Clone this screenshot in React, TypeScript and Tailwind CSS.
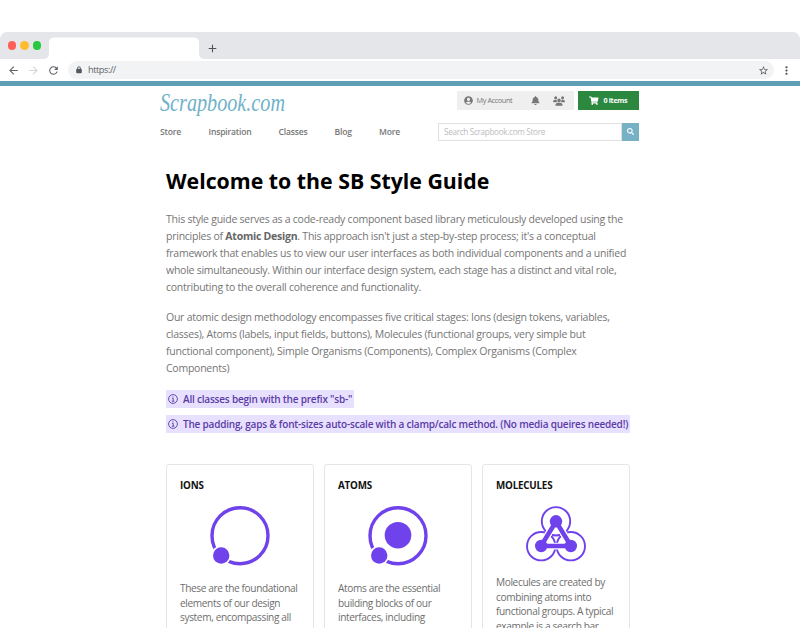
import type { ReactNode } from "react";
import { FaBell, FaShoppingCart, FaSearch, FaUserCircle } from "react-icons/fa";
import { FaUsers } from "react-icons/fa6";
import { MdArrowBack, MdArrowForward, MdRefresh, MdStarBorder, MdMoreVert, MdAdd } from "react-icons/md";

const PURPLE = "#6f42ec";

function Lines({ lines }: { lines: ReactNode[] }) {
  return (
    <>
      {lines.map((line, i) => (
        <span key={i} className="block whitespace-nowrap">{line}</span>
      ))}
    </>
  );
}

function Chrome() {
  return (
    <div className="mt-8 h-[54px] w-full">
      <div className="flex h-[27px] items-end rounded-t-[7px] bg-[#e5e6ea]">
        <div className="flex h-[27px] w-[43px] shrink-0 items-center gap-[4.3px] pl-[7.8px]">
          <span className="size-[8.3px] rounded-full bg-[#ff5f57]" />
          <span className="size-[8.3px] rounded-full bg-[#febc2e]" />
          <span className="size-[8.3px] rounded-full bg-[#28c840]" />
        </div>
        <svg className="h-[22px] w-[162px] shrink-0" viewBox="0 0 162 22">
          <path d="M0 22 Q6 22 6 16 V6 Q6 .5 11 .5 H151 Q156 .5 156 6 V16 Q156 22 162 22Z" fill="#fff" />
        </svg>
        <MdAdd className="mb-[4.5px] ml-[1px] size-[13px] text-[#4d5056]" />
      </div>
      <div className="flex h-[22px] items-center">
        <MdArrowBack className="ml-[7px] size-[13px] shrink-0 text-[#5f6368]" />
        <MdArrowForward className="ml-[7px] size-[13px] shrink-0 text-[#d5d6d9]" />
        <MdRefresh className="ml-[7px] size-[13px] shrink-0 text-[#5f6368]" />
        <div className="ml-[8px] flex h-[18px] w-[706px] shrink-0 items-center rounded-full bg-[#f1f3f4] pl-[8px]">
          <svg className="h-[8px] w-[6px]" viewBox="0 0 6 8">
            <rect x=".2" y="2.8" width="5.6" height="4.4" rx="1" fill="#55585d" />
            <path d="M1.5 3V2.3a1.5 1.5 0 0 1 3 0V3" fill="none" stroke="#55585d" strokeWidth=".9" />
          </svg>
          <span className="ml-[6px] text-[9.3px] leading-none tracking-[-0.5px] text-[#5f6368]">https://</span>
          <MdStarBorder className="mr-[5px] ml-auto size-[11px] text-[#5f6368]" />
        </div>
        <MdMoreVert className="ml-[5.5px] size-[13px] shrink-0 text-[#4d5056]" />
      </div>
      <div className="h-[5px] bg-[#5f9fb5]" />
    </div>
  );
}

function Header() {
  return (
    <header className="ml-[160px] flex h-[58px] w-[479px] shrink-0 justify-between text-[#777]">
      <div className="w-[260px]">
        <svg className="block h-[34px] w-[130px] overflow-visible" viewBox="0 0 130 34">
          <text x="0" y="24.5" textLength="125" lengthAdjust="spacingAndGlyphs" fill="#6fb2c8" fontSize="25" fontStyle="italic" fontFamily="'Liberation Serif', serif">Scrapbook.com</text>
        </svg>
        <nav className="mt-[6px] flex text-[8.6px] leading-[12px] font-semibold tracking-[-0.2px]">
          <span className="w-[48.5px]">Store</span>
          <span className="w-[70px]">Inspiration</span>
          <span className="w-[56px]">Classes</span>
          <span className="w-[44.5px]">Blog</span>
          <span>More</span>
        </nav>
      </div>
      <div className="w-[201px] pt-[5px]">
        <div className="ml-[19px] flex h-[19px] justify-between">
          <div className="flex w-[117px] items-center bg-[#efefef] pl-[7px] text-[#777]">
            <FaUserCircle className="size-[9px]" />
            <span className="ml-[3.5px] w-[37px] text-[7.3px] tracking-[-0.4px] whitespace-nowrap">My Account</span>
            <FaBell className="ml-[17px] size-[9px]" />
            <FaUsers className="ml-[13.5px] size-[12px]" />
          </div>
          <div className="flex w-[61px] items-center bg-[#2c873f] pl-[11px] text-white">
            <FaShoppingCart className="size-[9.5px]" />
            <span className="ml-[5px] text-[7.2px] font-bold tracking-[-0.35px] whitespace-nowrap">0 items</span>
          </div>
        </div>
        <div className="mt-[12.5px] flex h-[18.5px]">
          <div className="flex w-[184px] items-center border border-[#dfdfdf] pl-[5px] text-[8.2px] tracking-[-0.33px] text-[#bdbdbd]">Search Scrapbook.com Store</div>
          <div className="flex w-[17px] items-center justify-center bg-[#76b1c6]">
            <FaSearch className="size-[7px] text-white" />
          </div>
        </div>
      </div>
    </header>
  );
}

function Notice({ children }: { children: ReactNode }) {
  return (
    <div className="flex h-[18px] w-max items-center bg-[#e8e0ff] px-[2px] text-[10px] font-semibold tracking-[-0.2px] whitespace-nowrap text-[#5a3ba5]">
      <svg className="mr-[5px] size-[10px]" viewBox="0 0 10 10" fill="none" stroke="#5a3ba5">
        <circle cx="5" cy="5" r="4.4" strokeWidth=".9" />
        <path d="M4 4.4H5.2V7.2M3.8 7.2H6.4" strokeWidth=".9" />
        <circle cx="5" cy="2.8" r=".6" fill="#5a3ba5" stroke="none" />
      </svg>
      {children}
    </div>
  );
}

function Orbit({ core }: { core?: boolean }) {
  return (
    <svg className="mb-[15px] size-[60px]" viewBox="0 0 60 60">
      <circle cx="30" cy="29.7" r="28" fill="none" stroke={PURPLE} strokeWidth="3.4" />
      {core && <circle cx="30" cy="29.2" r="13.3" fill={PURPLE} />}
      <circle cx="11.2" cy="49.5" r="10" fill="#fff" />
      <circle cx="11.2" cy="49.5" r="8.2" fill={PURPLE} />
    </svg>
  );
}

function Molecule() {
  return (
    <svg className="mb-[13px] h-[56px] w-[60px]" viewBox="0 0 60 56" fill="none">
      <g stroke={PURPLE} strokeWidth="1.9">
        <circle cx="30" cy="15.3" r="14.2" />
        <circle cx="15.2" cy="40.2" r="14.2" />
        <circle cx="44.8" cy="40.2" r="14.2" />
      </g>
      <path d="M30 15.5L15 40H45Z" stroke="#fff" strokeWidth="7.2" strokeLinejoin="round" />
      <path d="M30 15.5L15 40H45Z" stroke={PURPLE} strokeWidth="4.5" strokeLinejoin="round" />
      <path d="M26 28.6Q30 30 34 28.6M25.5 30.5Q28.2 33 28.9 36.8M34.5 30.5Q31.8 33 31.1 36.8" stroke={PURPLE} strokeWidth="1.3" />
      <g fill={PURPLE}>
        <circle cx="30" cy="15.3" r="6.2" />
        <circle cx="15.2" cy="40" r="6.2" />
        <circle cx="44.8" cy="40" r="6.2" />
      </g>
    </svg>
  );
}

function Card({ title, icon, lines }: { title: string; icon: ReactNode; lines: string[] }) {
  return (
    <article className="h-[240px] rounded-[3px] border border-[#e5e5e5] px-[13px] pt-[13px]">
      <h2 className="text-[9.8px] leading-[16px] font-bold tracking-[-0.2px] text-[#111]">{title}</h2>
      <div className="mt-[12px] flex justify-center">{icon}</div>
      <p className="text-[10.1px] leading-[14.7px] tracking-[-0.36px] text-[#6e6e6e]">
        <Lines lines={lines} />
      </p>
    </article>
  );
}

export default function App() {
  return (
    <div className="flex h-[628px] w-[800px] flex-col overflow-hidden bg-white font-['Open_Sans',sans-serif]">
      <Chrome />
      <Header />
      <main className="ml-[166px] w-[464px] shrink-0 pt-[20px]">
        <h1 className="text-[21.3px] leading-[34px] font-bold whitespace-nowrap text-black">Welcome to the SB Style Guide</h1>
        <div className="mt-[12.5px] text-[10.5px] leading-[17px] tracking-[-0.245px] text-[#757575]">
          <p>
            <Lines
              lines={[
                "This style guide serves as a code-ready component based library meticulously developed using the",
                <>principles of <b className="font-bold text-[#666]">Atomic Design</b>. This approach isn't just a step-by-step process; it's a conceptual</>,
                "framework that enables us to view our user interfaces as both individual components and a unified",
                "whole simultaneously. Within our interface design system, each stage has a distinct and vital role,",
                "contributing to the overall coherence and functionality.",
              ]}
            />
          </p>
          <p className="mt-[13.5px]">
            <Lines
              lines={[
                "Our atomic design methodology encompasses five critical stages: Ions (design tokens, variables,",
                "classes), Atoms (labels, input fields, buttons), Molecules (functional groups, very simple but",
                "functional component), Simple Organisms (Components), Complex Organisms (Complex",
                "Components)",
              ]}
            />
          </p>
        </div>
        <div className="mt-[13px] flex flex-col gap-[7px]">
          <Notice>All classes begin with the prefix "sb-"</Notice>
          <Notice>The padding, gaps &amp; font-sizes auto-scale with a clamp/calc method. (No media queires needed!)</Notice>
        </div>
        <div className="mt-[31px] grid grid-cols-3 gap-[10px]">
          <Card title="IONS" icon={<Orbit />} lines={["These are the foundational", "elements of our design", "system, encompassing all"]} />
          <Card title="ATOMS" icon={<Orbit core />} lines={["Atoms are the essential", "building blocks of our", "interfaces, including"]} />
          <Card title="MOLECULES" icon={<Molecule />} lines={["Molecules are created by", "combining atoms into", "functional groups. A typical", "example is a search bar"]} />
        </div>
      </main>
    </div>
  );
}
